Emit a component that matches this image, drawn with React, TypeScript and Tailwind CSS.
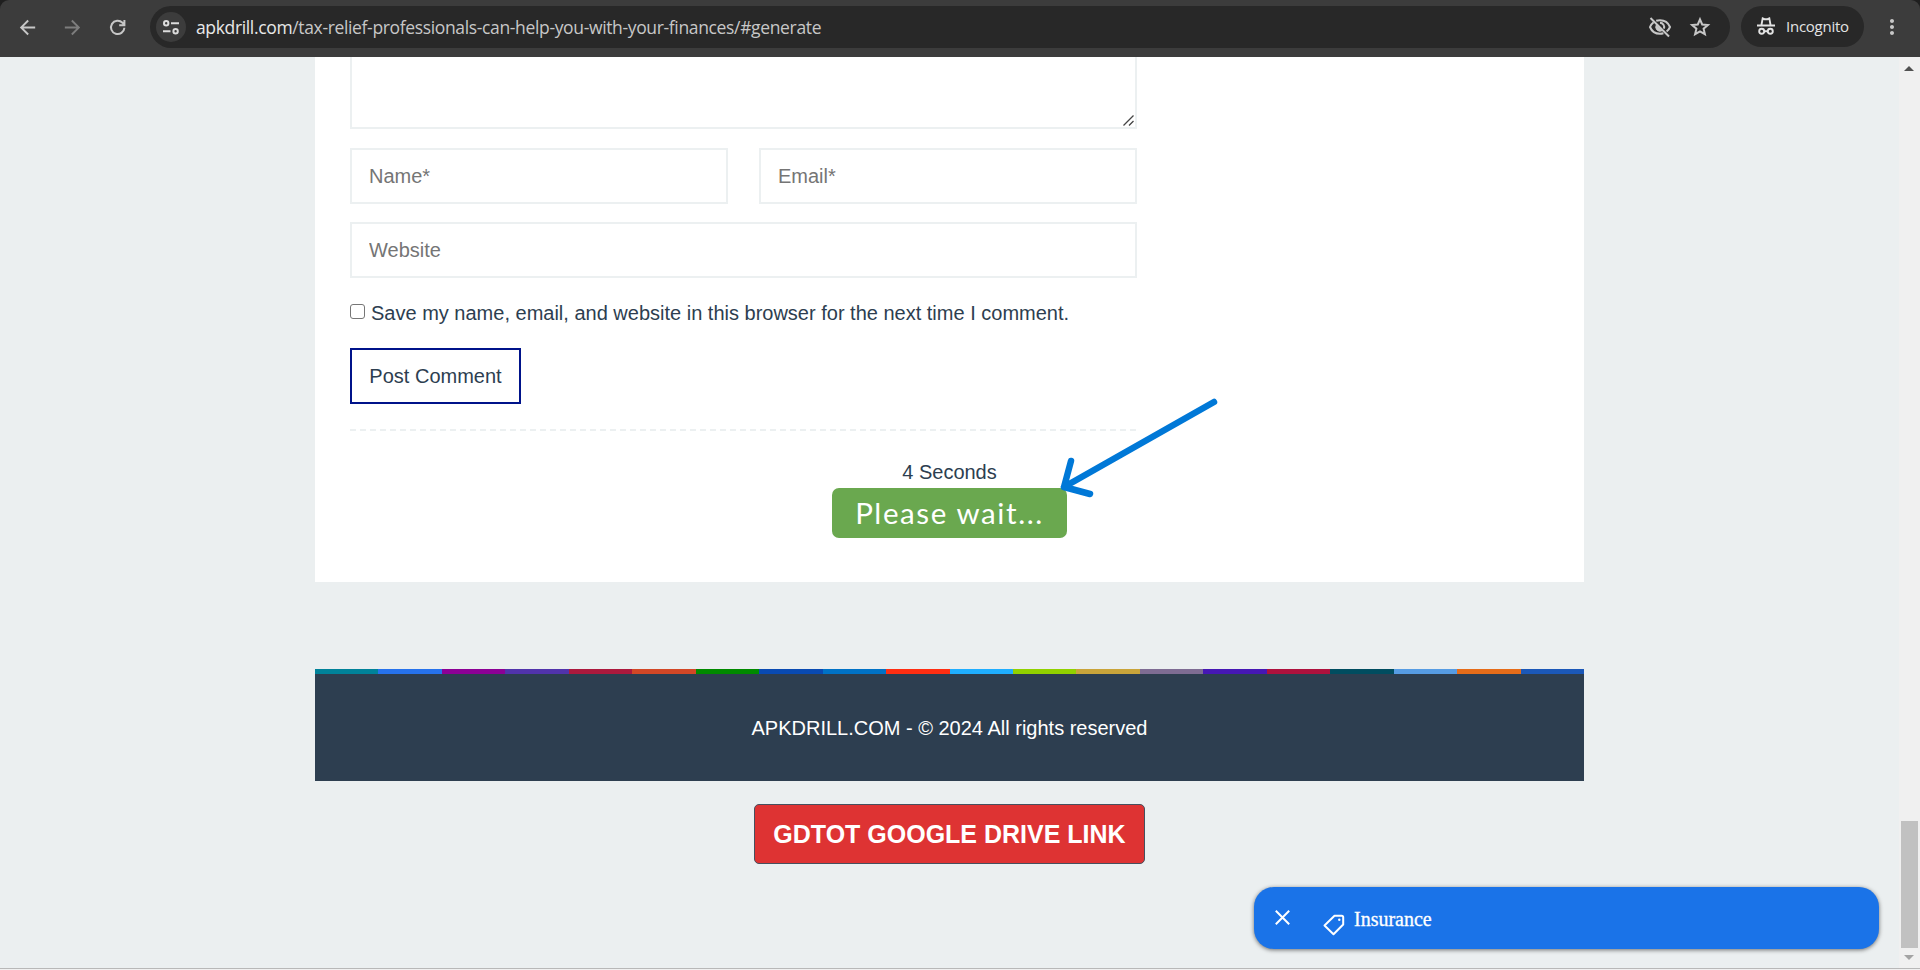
import React from "react";
import { MdArrowBack, MdArrowForward, MdMoreVert } from "react-icons/md";

const stripe = [
  "#008299", "#2672ec", "#8c0095", "#5133ab", "#ac193d",
  "#d24726", "#008a00", "#094ab2", "#0072c6", "#ff2e12",
  "#1faeff", "#91d100", "#c9a43a", "#7e6c93", "#4617b4",
  "#ae113d", "#004d60", "#569ce3", "#e56c19", "#1b58b8",
];

function BrowserBar() {
  return (
    <div className="h-[57px] shrink-0 bg-[#1f1f1f]">
      <header className="flex h-[57px] items-start rounded-t-[9px] bg-[#3c3c3c] pt-[6px]">
        <nav className="flex h-[42px] w-[150px] items-center text-[#c7c7c7]">
          <MdArrowBack className="ml-[16px] size-[23px]" />
          <MdArrowForward className="ml-[22px] size-[23px] text-[#7d7d7d]" />
          <svg className="ml-[22px] size-[23px]" viewBox="0 0 23 23" fill="none" stroke="currentColor" strokeWidth="2">
            <path d="M18.4 11.8a6.7 6.7 0 1 1-1.9-5.1l1.8 1.8M18.4 4v5.2h-5.2" />
          </svg>
        </nav>
        <div className="flex h-[42px] w-[1580px] items-center rounded-full bg-[#282828] pl-[6px] pr-[18px]">
          <div className="flex size-[30px] items-center justify-center rounded-full bg-[#3c3c3c]">
            <svg className="size-[18px]" viewBox="0 0 18 18" fill="none" stroke="#dcdcdc" strokeWidth="2">
              <circle cx="4.2" cy="5.2" r="2.2" />
              <path d="M9 5.2h8M1 13.3h7.5" />
              <circle cx="13.6" cy="13.3" r="2.2" />
            </svg>
          </div>
          <p className="ml-[10px] whitespace-nowrap font-['Open_Sans',sans-serif] text-[17.5px] leading-[24px] tracking-[-0.35px] text-[#c7c7c7]">
            <span className="text-[#e8e8e8]">apkdrill.com</span>/tax-relief-professionals-can-help-you-with-your-finances/#generate
          </p>
          <svg className="ml-auto size-[24px]" viewBox="0 0 24 24" fill="none" stroke="#c7c7c7" strokeWidth="2">
            <path d="M8.2 5.8A11 11 0 0 1 12 5.2c4.6 0 8.3 2.6 10 6.8a11 11 0 0 1-3.4 4.5M15.4 18.3a11 11 0 0 1-3.4.5c-4.6 0-8.3-2.6-10-6.8A11 11 0 0 1 5.6 7.3" />
            <path d="M12 7.8a4.2 4.2 0 0 1 3.8 5.9" />
            <path d="M8.3 10a4.2 4.2 0 0 0 5.7 5.7z" fill="#c7c7c7" strokeWidth="1" />
            <path d="M2.5 3l18.5 18.5" />
          </svg>
          <svg className="ml-[16px] size-[24px]" viewBox="0 0 24 24" fill="none" stroke="#c7c7c7" strokeWidth="2">
            <path d="M12 4.3l2.2 5.2 5.7.5-4.300 3.700 1.300 5.500-4.900-2.900-4.900 2.900 1.300-5.500L4.100 10l5.700-.5z" />
          </svg>
        </div>
        <div className="ml-[11px] flex h-[41px] w-[123px] items-center rounded-full bg-[#282828] pl-[15px]">
          <svg className="mb-px size-[20px]" viewBox="0 0 20 20" fill="none" stroke="#e3e3e3" strokeWidth="1.9">
            <path d="M1 9.5h18M5.4 9.3l1.3-6.9 1.8.8h3l1.8-.8 1.3 6.9M8 15.2h4" />
            <circle cx="5.7" cy="15.2" r="2.5" />
            <circle cx="14.3" cy="15.2" r="2.5" />
          </svg>
          <span className="ml-[10px] font-['Open_Sans',sans-serif] text-[15px] tracking-[-0.25px] text-[#e3e3e3]">Incognito</span>
        </div>
        <MdMoreVert className="ml-[16px] mt-[9px] size-[24px] text-[#c7c7c7]" />
      </header>
    </div>
  );
}

function Field({ label, className = "" }: { label: string; className?: string }) {
  return (
    <input
      placeholder={label}
      className={`block h-[56px] rounded-none border-2 border-[#ecf0f1] bg-white px-[17px] text-[20px] text-[#2d3e50] outline-none placeholder:text-[#757575] ${className}`}
    />
  );
}

function CommentForm() {
  return (
    <form className="w-[787px]">
      <div className="flex h-[72px] items-end justify-end border-2 border-t-0 border-[#ecf0f1] p-[1px]">
        <svg className="size-[11px]" viewBox="0 0 11 11" stroke="#444" strokeWidth="1.3">
          <path d="M.5 10.5l10-10M6 10.5L10.5 6" />
        </svg>
      </div>
      <div className="mt-[19px] flex justify-between">
        <Field label="Name*" className="w-[378px]" />
        <Field label="Email*" className="w-[378px]" />
      </div>
      <Field label="Website" className="mt-[18px] w-full" />
      <label className="mt-[20px] flex h-[30px] items-center whitespace-nowrap">
        <span className="mb-[3px] block size-[15px] shrink-0 rounded-[3px] border border-[#767676] bg-white" />
        <span className="ml-[6px]">Save my name, email, and website in this browser for the next time I comment.</span>
      </label>
      <button type="button" className="mt-[20px] block h-[56px] w-[171px] border-2 border-[#00138a] bg-white text-center">
        Post Comment
      </button>
      <div className="mt-[25px] h-[2px] bg-[repeating-linear-gradient(90deg,#ecf0f1_0_6px,transparent_6px_10px)]" />
    </form>
  );
}

export default function App() {
  return (
    <div className="relative flex h-[970px] w-[1920px] flex-col overflow-hidden bg-[#ebeff0] font-['Liberation_Sans',Arial,sans-serif] text-[20px] text-[#2d3e50]">
      <BrowserBar />
      <div className="flex h-[911px] shrink-0">
        <main className="flex w-[1899px] flex-col items-center">
          <section className="h-[525px] w-[1269px] bg-white px-[35px]">
            <CommentForm />
            <div className="mt-[26px] flex flex-col items-center">
              <p className="h-[31px] leading-[30px]">4 Seconds</p>
              <button type="button" className="h-[50px] w-[235px] rounded-[7px] bg-[#6aa84f] font-[Lato,sans-serif] text-[29.5px] leading-[50px] tracking-[1.6px] text-white">
                Please wait...
              </button>
            </div>
          </section>
          <footer className="mt-[87px] h-[112px] w-[1269px] bg-[#2d3e50]">
            <div className="flex h-[5px]">
              {stripe.map((color) => (
                <span key={color} className="h-full flex-1" style={{ backgroundColor: color }} />
              ))}
            </div>
            <p className="mt-[39px] text-center leading-[30px] text-white">APKDRILL.COM - © 2024 All rights reserved</p>
          </footer>
          <button type="button" className="mt-[23px] h-[60px] w-[391px] rounded-[5px] border border-[#46505e] bg-[#de3333] pt-[2px] text-[25px] font-bold text-white">
            GDTOT GOOGLE DRIVE LINK
          </button>
        </main>
        <aside className="flex w-[21px] flex-col items-center bg-[#f0f0f0] pr-px">
          <svg className="mt-[9px] h-[5px] w-[10px]" viewBox="0 0 10 5"><path d="M0 5L5 0l5 5z" fill="#505050" /></svg>
          <div className="mt-[750px] h-[127px] w-[17px] bg-[#c1c1c1]" />
          <svg className="mt-[7px] h-[5px] w-[10px]" viewBox="0 0 10 5"><path d="M0 0l5 5 5-5z" fill="#a3a3a3" /></svg>
        </aside>
      </div>
      <div className="h-[2px] shrink-0 border-t border-[#b8b8b8] bg-[#f0f0f0]" />

      <div className="absolute left-[1254px] top-[887px] flex h-[62px] w-[625px] items-center rounded-[20px] bg-[#1a73e8] text-white shadow-[0_1px_4px_rgba(0,0,0,0.55)]">
        <svg className="mb-px ml-[21px] size-[15px]" viewBox="0 0 15 15" stroke="white" strokeWidth="2"><path d="M.8.8l13.4 13.4M14.2.8L.8 14.2" /></svg>
        <svg className="ml-[33px] mt-[13px] size-[22px]" viewBox="0 0 22 22" fill="none" stroke="white" strokeWidth="2" strokeLinejoin="round">
          <path d="M11.5 1.8h7.2q1.5 0 1.5 1.5v7.2L10.5 20.2 1.5 11.5z" />
          <circle cx="16.3" cy="5.7" r="1.2" fill="white" stroke="none" />
        </svg>
        <span className="ml-[9px] mt-px font-['Liberation_Serif','Times_New_Roman',serif] text-[20px] leading-[24px] [-webkit-text-stroke:0.3px_white]">Insurance</span>
      </div>

      <svg className="absolute left-[1055px] top-[395px] h-[106px] w-[168px]" viewBox="0 0 168 106" fill="none" stroke="#0078d7" strokeWidth="6.5" strokeLinecap="round" strokeLinejoin="round">
        <path d="M159 7L9 92M16 66L9 92l26 7" />
      </svg>
    </div>
  );
}
